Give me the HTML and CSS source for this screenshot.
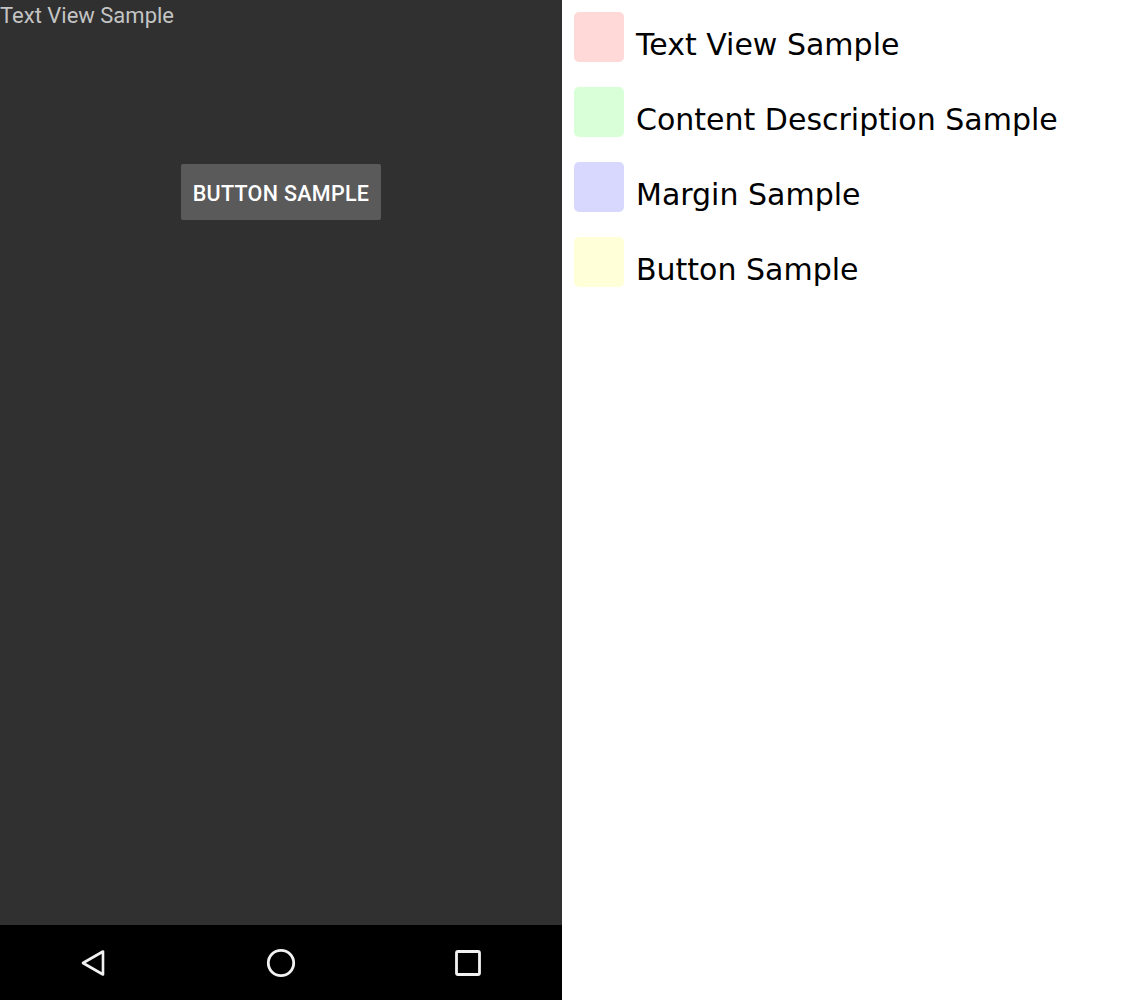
FILE: index.html
```html
<!DOCTYPE html>
<html>
<head>
<meta charset="utf-8">
<link rel="stylesheet" href="styles.css">
</head>
<body>
<div class="page">
  <div class="phone">
    <div class="screen">
      <div class="tv">Text View Sample</div>
      <div class="btn-wrap"><div class="btn">BUTTON SAMPLE</div></div>
    </div>
    <div class="navbar">
      <svg class="nav-icon" width="30" height="30" viewBox="0 0 30 30"><path d="M24 3.5 L24 26.5 L4 15 Z" fill="none" stroke="#f2f2f2" stroke-width="2.6" stroke-linejoin="round"/></svg>
      <svg class="nav-icon" width="30" height="30" viewBox="0 0 30 30"><circle cx="15" cy="15" r="12.7" fill="none" stroke="#f2f2f2" stroke-width="2.8"/></svg>
      <svg class="nav-icon" width="30" height="30" viewBox="0 0 30 30"><rect x="3.5" y="3.5" width="23" height="23" rx="1.5" fill="none" stroke="#f2f2f2" stroke-width="2.8"/></svg>
    </div>
  </div>
  <div class="legend">
    <div class="row"><span class="sw pink"></span><span class="label">Text View Sample</span></div>
    <div class="row"><span class="sw green"></span><span class="label">Content Description Sample</span></div>
    <div class="row"><span class="sw blue"></span><span class="label">Margin Sample</span></div>
    <div class="row"><span class="sw yellow"></span><span class="label">Button Sample</span></div>
  </div>
</div>
</body>
</html>
```
FILE: styles.css
```css
html, body { margin: 0; padding: 0; background: #ffffff; }
.page { display: flex; width: 1124px; height: 1000px; }
.phone { width: 562px; height: 1000px; display: flex; flex-direction: column; background: #303030; }
.screen { flex: 1; display: flex; flex-direction: column; }
.tv { font-family: Roboto, sans-serif; font-size: 22px; color: #c4c4c4; line-height: 32px; height: 32px; }
.btn-wrap { display: flex; justify-content: center; padding-top: 132px; }
.btn { box-sizing: border-box; width: 200px; height: 56px; padding-top: 2px; background: #5a5a5a; border-radius: 2px; color: #ffffff; font-family: Roboto, sans-serif; font-weight: 500; font-size: 21.5px; display: flex; align-items: center; justify-content: center; letter-spacing: 0.3px; }
.navbar { height: 75px; background: #000000; display: flex; align-items: center; justify-content: space-between; padding: 0 79px 0 79px; }
.nav-icon { display: block; }
.legend { flex: 1; padding: 12px 0 0 12px; display: flex; flex-direction: column; gap: 25px; }
.row { display: flex; align-items: flex-start; height: 50px; }
.sw { width: 50px; height: 50px; border-radius: 5px; flex: none; }
.pink { background: #ffd8d8; }
.green { background: #d8ffd8; }
.blue { background: #d8d8ff; }
.yellow { background: #ffffd8; }
.label { font-family: "DejaVu Sans", sans-serif; font-size: 30px; color: #000; margin-left: 12px; margin-top: 15px; line-height: 36px; white-space: nowrap; }
```
